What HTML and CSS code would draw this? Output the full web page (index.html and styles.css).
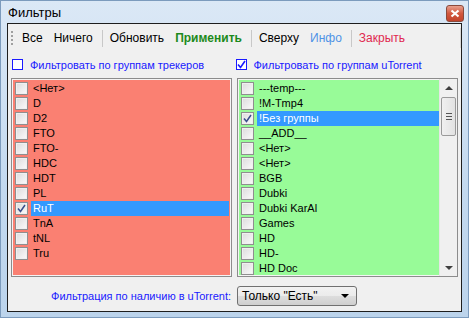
FILE: index.html
```html
<!DOCTYPE html>
<html lang="ru">
<head>
<meta charset="UTF-8">
<title>Фильтры</title>
<link rel="stylesheet" href="styles.css">
</head>
<body>
    <div class="window">
        <div class="titlebar">
            <span class="title">Фильтры</span>
            <span class="close">
                <svg width="10" height="9" viewBox="0 0 10 9"><path d="M1.5 1.5 L8.5 7.5 M8.5 1.5 L1.5 7.5" stroke="#fff" stroke-width="2.2"/></svg>
            </span>
        </div>

        <div class="client">
            <!-- Панель инструментов -->
            <div class="toolbar">
                <span class="grip"></span>
                <span class="tb">Все</span>
                <span class="tb">Ничего</span>
                <span class="sep"></span>
                <span class="tb">Обновить</span>
                <span class="tb apply">Применить</span>
                <span class="sep"></span>
                <span class="tb">Сверху</span>
                <span class="tb info">Инфо</span>
                <span class="sep"></span>
                <span class="tb close-link">Закрыть</span>
            </div>

            <div class="checks">
                <label class="opt"><span class="box"></span>Фильтровать по группам трекеров</label>
                <label class="opt right"><span class="box on">
                    <svg width="9" height="9" viewBox="0 0 9 9"><path d="M1 4.5 L3.5 7.5 L8 1" fill="none" stroke="#1a1aff" stroke-width="1.6"/></svg>
                </span>Фильтровать по группам uTorrent</label>
            </div>

            <div class="lists">
                <div class="list red">
                    <div class="item"><span class="cb"></span><span class="txt">&lt;Нет&gt;</span></div>
                    <div class="item"><span class="cb"></span><span class="txt">D</span></div>
                    <div class="item"><span class="cb"></span><span class="txt">D2</span></div>
                    <div class="item"><span class="cb"></span><span class="txt">FTO</span></div>
                    <div class="item"><span class="cb"></span><span class="txt">FTO-</span></div>
                    <div class="item"><span class="cb"></span><span class="txt">HDC</span></div>
                    <div class="item"><span class="cb"></span><span class="txt">HDT</span></div>
                    <div class="item"><span class="cb"></span><span class="txt">PL</span></div>
                    <div class="item sel"><span class="cb checked"><svg width="9" height="9" viewBox="0 0 9 9"><path d="M1 4.5 L3.5 7.5 L8 1" fill="none" stroke="#3a4e8c" stroke-width="1.5"/></svg></span><span class="txt">RuT</span></div>
                    <div class="item"><span class="cb"></span><span class="txt">TnA</span></div>
                    <div class="item"><span class="cb"></span><span class="txt">tNL</span></div>
                    <div class="item"><span class="cb"></span><span class="txt">Tru</span></div>
                </div>

                <div class="list green">
                    <div class="rows">
                        <div class="item"><span class="cb"></span><span class="txt">---temp---</span></div>
                        <div class="item"><span class="cb"></span><span class="txt">!M-Tmp4</span></div>
                        <div class="item sel"><span class="cb checked"><svg width="9" height="9" viewBox="0 0 9 9"><path d="M1 4.5 L3.5 7.5 L8 1" fill="none" stroke="#3a4e8c" stroke-width="1.5"/></svg></span><span class="txt">!Без группы</span></div>
                        <div class="item"><span class="cb"></span><span class="txt">__ADD__</span></div>
                        <div class="item"><span class="cb"></span><span class="txt">&lt;Нет&gt;</span></div>
                        <div class="item"><span class="cb"></span><span class="txt">&lt;Нет&gt;</span></div>
                        <div class="item"><span class="cb"></span><span class="txt">BGB</span></div>
                        <div class="item"><span class="cb"></span><span class="txt">Dubki</span></div>
                        <div class="item"><span class="cb"></span><span class="txt">Dubki KarAl</span></div>
                        <div class="item"><span class="cb"></span><span class="txt">Games</span></div>
                        <div class="item"><span class="cb"></span><span class="txt">HD</span></div>
                        <div class="item"><span class="cb"></span><span class="txt">HD-</span></div>
                        <div class="item"><span class="cb"></span><span class="txt">HD Doc</span></div>
                    </div>
                    <div class="scrollbar">
                        <span class="arrow up"></span>
                        <div class="track">
                            <div class="thumb"><span class="grip-lines"></span></div>
                        </div>
                        <span class="arrow down"></span>
                    </div>
                </div>
            </div>

            <div class="bottom">
                <span class="label">Фильтрация по наличию в uTorrent:</span>
                <div class="combo">
                    <span>Только "Есть"</span>
                    <span class="caret"></span>
                </div>
            </div>
        </div>
    </div>
</body>
</html>
```

FILE: styles.css
```css
body {
    margin: 0;
    padding: 0;
    font-family: "Liberation Sans", Arial, sans-serif;
    background: #c6dcf1;
}
.window {
    width: 469px;
    height: 318px;
    box-sizing: border-box;
    background: linear-gradient(#dbe8f6, #c3d9ef 60%, #bcd4ec);
    border: 1px solid #7c9bbd;
    display: flex;
    flex-direction: column;
}
.titlebar {
    height: 22px;
    display: flex;
    align-items: center;
    justify-content: space-between;
    padding: 0 4px 0 7px;
}
.title {
    font-size: 13px;
    color: #000;
    margin-top: 1px;
}
.close {
    width: 16px;
    height: 15px;
    margin-top: 3px;
    border: 1px solid #8a4a3c;
    border-radius: 3px;
    background: linear-gradient(#e8a08e, #d2583f 50%, #c2432b);
    display: flex;
    align-items: center;
    justify-content: center;
}
.client {
    margin: 0 6px 0 6px;
    height: 289px;
    box-sizing: border-box;
    border: 1px solid #1e1e1e;
    background: #f0f0f0;
    display: flex;
    flex-direction: column;
    padding: 0 3px 0 3px;
}
.toolbar {
    height: 20px;
    margin-top: 4px;
    display: flex;
    align-items: center;
    font-size: 12px;
    border-right: 1px solid #d8d8d8;
    margin-right: -3px;
}
.grip {
    width: 2px;
    height: 15px;
    margin: 0 9px 0 0;
    background: repeating-linear-gradient(#a0a0a0 0 2px, transparent 2px 4px);
}
.tb {
    color: #000;
    margin-right: 11px;
}
.tb.apply {
    color: #1c8a1c;
    font-weight: bold;
}
.tb.info {
    color: #4f93e6;
}
.tb.close-link {
    color: #e0284f;
}
.sep {
    width: 1px;
    height: 17px;
    background: #c8c8c8;
    margin: 0 7px 0 -2px;
}
.checks {
    display: flex;
    font-size: 11px;
    color: #1a1aff;
    margin-top: 10px;
    height: 13px;
    align-items: center;
}
.opt {
    display: flex;
    align-items: center;
    width: 226px;
}
.box {
    width: 9px;
    height: 9px;
    border: 1px solid #1a1aff;
    background: #fff;
    margin: 0 7px 0 1px;
    display: flex;
    align-items: center;
    justify-content: center;
}
.lists {
    display: flex;
    gap: 5px;
    margin-top: 7px;
}
.list {
    width: 221px;
    height: 199px;
    box-sizing: border-box;
    border: 1px solid #8c8c8c;
    box-shadow: inset 0 0 0 1px #f4f4f4;
    font-size: 11px;
    padding: 2px;
}
.list.red {
    background: #fa8072;
    background-clip: padding-box;
}
.list.green {
    background: #98fb98;
    display: flex;
    padding-right: 0;
}
.rows {
    flex: 1;
}
.item {
    height: 15px;
    display: flex;
    align-items: center;
    color: #000;
}
.cb {
    width: 11px;
    height: 11px;
    border: 1px solid #8f8f8f;
    background: linear-gradient(135deg, #dcdcdc, #fbfbfb);
    box-shadow: inset 0 0 0 1px #f0f0f0;
    margin: 0 3px 0 1px;
    flex: none;
    display: flex;
    align-items: center;
    justify-content: center;
}
.txt {
    flex: 1;
    height: 15px;
    line-height: 15px;
    padding-left: 2px;
}
.item.sel .txt {
    background: #3399ff;
    color: #fff;
}
.scrollbar {
    width: 17px;
    margin: -2px 0 -2px 0;
    background: #f0f0f0;
    border-left: 1px solid #e6e6e6;
    display: flex;
    flex-direction: column;
}
.arrow {
    height: 17px;
    display: flex;
    align-items: center;
    justify-content: center;
}
.arrow::before {
    content: "";
    border-left: 4px solid transparent;
    border-right: 4px solid transparent;
}
.arrow.up::before {
    border-bottom: 4px solid #404040;
}
.arrow.down::before {
    border-top: 4px solid #404040;
}
.track {
    flex: 1;
}
.thumb {
    height: 37px;
    margin: 1px 1px 0 1px;
    border: 1px solid #9a9a9a;
    border-radius: 2px;
    background: linear-gradient(90deg, #f0f0f0, #e2e2e2);
    display: flex;
    align-items: center;
    justify-content: center;
}
.grip-lines {
    width: 6px;
    height: 7px;
    background: repeating-linear-gradient(#555 0 1px, transparent 1px 3px);
}
.bottom {
    display: flex;
    align-items: center;
    margin-top: 9px;
}
.label {
    font-size: 11px;
    color: #1a1aff;
    width: 220px;
    text-align: right;
    margin-right: 6px;
}
.combo {
    width: 120px;
    height: 20px;
    box-sizing: border-box;
    border: 1px solid #707070;
    border-radius: 3px;
    background: linear-gradient(#f2f2f2, #ebebeb 50%, #dddddd 51%, #cfcfcf);
    font-size: 12px;
    display: flex;
    align-items: center;
    justify-content: space-between;
    padding: 0 7px 0 4px;
    color: #000;
}
.caret {
    border-left: 4px solid transparent;
    border-right: 4px solid transparent;
    border-top: 4px solid #000;
}
```
